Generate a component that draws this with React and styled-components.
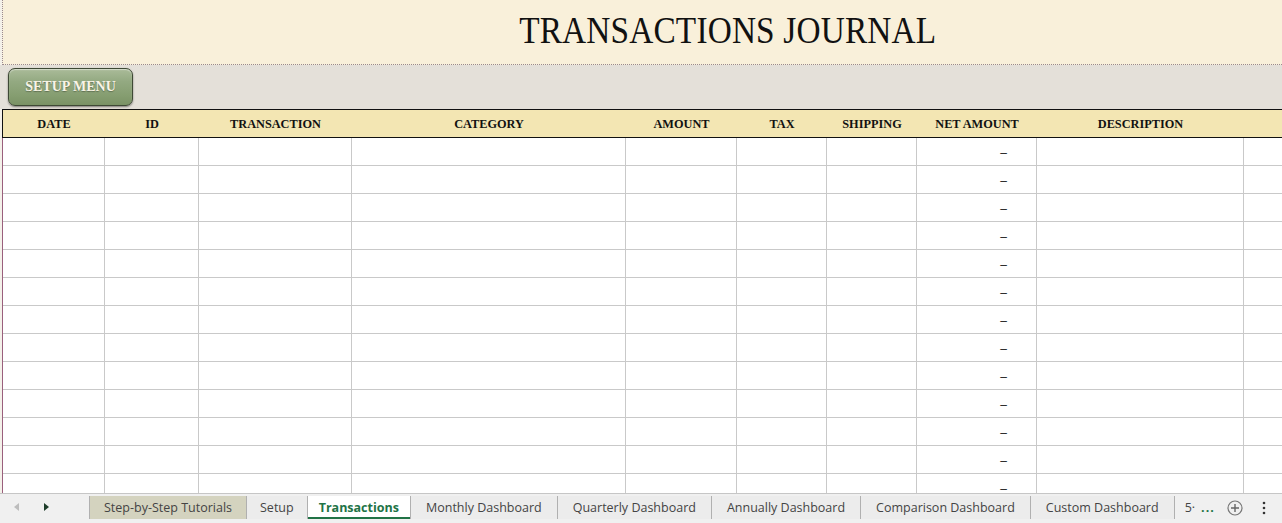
import React from 'react';
import styled, { createGlobalStyle } from 'styled-components';

const GlobalStyle = createGlobalStyle`
  html, body {
    margin: 0;
    padding: 0;
  }
  body {
    background: #f4f1ea;
    overflow: hidden;
  }
`;

const COLUMNS = [
  { label: 'DATE', width: 102 },
  { label: 'ID', width: 94 },
  { label: 'TRANSACTION', width: 153 },
  { label: 'CATEGORY', width: 274 },
  { label: 'AMOUNT', width: 111 },
  { label: 'TAX', width: 90 },
  { label: 'SHIPPING', width: 90 },
  { label: 'NET AMOUNT', width: 120, dash: true },
  { label: 'DESCRIPTION', width: 207 },
  { label: '', width: null },
];

const gridTemplate = COLUMNS.map(c => (c.width ? `${c.width}px` : '1fr')).join(' ');

const TABS = [
  { label: 'Step-by-Step Tutorials', tone: 'khaki' },
  { label: 'Setup', pad: 13 },
  { label: 'Transactions', active: true },
  { label: 'Monthly Dashboard' },
  { label: 'Quarterly Dashboard' },
  { label: 'Annually Dashboard' },
  { label: 'Comparison Dashboard' },
  { label: 'Custom Dashboard' },
];

const ROW_COUNT = 13;

const Sheet = styled.div`
  width: 1282px;
  height: 523px;
  display: flex;
  flex-direction: column;
  overflow: hidden;
`;

const TitleBand = styled.header`
  height: 65px;
  margin-left: 2px;
  box-sizing: border-box;
  background: #f9f0da;
  border-left: 1px dotted #9a8a90;
  border-bottom: 1px dotted #9a8a90;
  display: flex;
  align-items: center;
  justify-content: center;
  padding: 0 0 4px 170px;
`;

const Title = styled.h1`
  margin: 0;
  font-family: 'Liberation Serif', 'Times New Roman', serif;
  font-weight: normal;
  font-size: 37px;
  letter-spacing: 0.2px;
  color: #111;
  transform: scaleX(0.9);
`;

const ToolBand = styled.div`
  height: 44px;
  box-sizing: border-box;
  background: #e4e0d9;
  padding: 3px 0 0 8px;
  display: flex;
  align-items: flex-start;
`;

const MenuButton = styled.button`
  width: 125px;
  height: 38px;
  box-sizing: border-box;
  border: 1px solid #3e4935;
  border-radius: 7px;
  background: linear-gradient(#aabb99 0%, #93a981 35%, #859d70 75%, #7a9265 100%);
  box-shadow: inset 0 1px 1px rgba(255, 255, 255, 0.5), 0 1px 2px rgba(0, 0, 0, 0.45);
  color: #f8f4e6;
  font-family: 'Liberation Serif', 'Times New Roman', serif;
  font-weight: bold;
  font-size: 14px;
  text-shadow: 0 1px 1px rgba(0, 0, 0, 0.3);
  padding: 0 0 1px;
  cursor: pointer;
`;

const Grid = styled.div`
  flex: 1;
  overflow: hidden;
  margin-left: 2px;
  background: #fff;
`;

const HeaderRow = styled.div`
  display: grid;
  grid-template-columns: ${gridTemplate};
  height: 29px;
  box-sizing: border-box;
  background: #f3e6b3;
  border-top: 1px solid #111;
  border-bottom: 1px solid #111;
  border-left: 1px solid #111;
`;

const HeaderCell = styled.div`
  display: flex;
  align-items: center;
  justify-content: center;
  font-family: 'Liberation Serif', 'Times New Roman', serif;
  font-weight: bold;
  font-size: 12.3px;
  color: #111;
  padding-top: 1px;
`;

const Row = styled.div`
  display: grid;
  grid-template-columns: ${gridTemplate};
  height: 28px;
  border-left: 1px solid #9a5f7c;
`;

const Cell = styled.div`
  box-sizing: border-box;
  border-right: 1px solid #c9c9c9;
  border-bottom: 1px solid #c9c9c9;
  display: flex;
  align-items: center;
  justify-content: flex-end;
  padding: 3px 29px 0 0;
  font-family: 'Liberation Sans', Arial, sans-serif;
  font-size: 12px;
  color: #222;
  &:last-child {
    border-right: none;
  }
`;

const TabBar = styled.footer`
  height: 30px;
  box-sizing: border-box;
  background: #f0f0f0;
  border-top: 1px solid #c6c6c6;
  display: flex;
  align-items: stretch;
  padding-bottom: 4px;
  font-family: 'Open Sans', 'Noto Sans', sans-serif;
  font-size: 12.5px;
  color: #444;
`;

const NavArrows = styled.div`
  width: 89px;
  display: flex;
  align-items: center;
  gap: 25px;
  padding-left: 14px;
  box-sizing: border-box;
`;

const Tab = styled.div`
  display: flex;
  align-items: center;
  padding: 0 ${p => p.$pad}px;
  margin-top: 2px;
  border-left: 1px solid #b0b0b0;
  background: ${p => (p.$active ? '#fff' : p.$tone === 'khaki' ? '#d4d3bf' : '#ececec')};
  color: ${p => (p.$active ? '#217346' : '#444')};
  font-weight: ${p => (p.$active ? 700 : 400)};
  box-shadow: ${p => (p.$active ? 'inset 0 -2px 0 #217346' : 'none')};
  white-space: nowrap;
`;

const Overflow = styled.div`
  display: flex;
  align-items: center;
  margin-top: 2px;
  padding-left: 10px;
  border-left: 1px solid #b0b0b0;
`;

const More = styled.span`
  color: #217346;
  font-weight: bold;
  letter-spacing: 1px;
  margin-left: 6px;
`;

const IconSlot = styled.span`
  display: flex;
  align-items: center;
  margin-left: ${p => p.$gap || 0}px;
`;

function Arrow({ dir, color }) {
  const points = dir === 'left' ? '5,0 5,8 0,4' : '0,0 0,8 5,4';
  return (
    <svg width="5" height="8" viewBox="0 0 5 8">
      <polygon points={points} fill={color} />
    </svg>
  );
}

function AddSheetIcon() {
  return (
    <svg width="16" height="16" viewBox="0 0 16 16">
      <circle cx="8" cy="8" r="7" fill="none" stroke="#777" strokeWidth="1.2" />
      <path d="M8 4v8M4 8h8" stroke="#666" strokeWidth="1.4" />
    </svg>
  );
}

function KebabIcon() {
  return (
    <svg width="4" height="14" viewBox="0 0 4 14">
      <circle cx="2" cy="2" r="1.3" fill="#333" />
      <circle cx="2" cy="7" r="1.3" fill="#333" />
      <circle cx="2" cy="12" r="1.3" fill="#333" />
    </svg>
  );
}

function tabPadding(t) {
  if (t.pad) return t.pad;
  if (t.active) return 11;
  if (t.tone === 'khaki') return 14;
  return 15;
}

export default function App() {
  return (
    <Sheet>
      <GlobalStyle />
      <TitleBand>
        <Title>TRANSACTIONS JOURNAL</Title>
      </TitleBand>
      <ToolBand>
        <MenuButton>SETUP MENU</MenuButton>
      </ToolBand>
      <Grid>
        <HeaderRow>
          {COLUMNS.map((c, i) => (
            <HeaderCell key={i}>{c.label}</HeaderCell>
          ))}
        </HeaderRow>
        {Array.from({ length: ROW_COUNT }).map((_, r) => (
          <Row key={r}>
            {COLUMNS.map((c, i) => (
              <Cell key={i}>{c.dash ? '–' : ''}</Cell>
            ))}
          </Row>
        ))}
      </Grid>
      <TabBar>
        <NavArrows>
          <Arrow dir="left" color="#bdbdbd" />
          <Arrow dir="right" color="#1e3d2a" />
        </NavArrows>
        {TABS.map(t => (
          <Tab key={t.label} $active={t.active} $tone={t.tone} $pad={tabPadding(t)}>
            {t.label}
          </Tab>
        ))}
        <Overflow>
          <span>5·</span>
          <More>...</More>
          <IconSlot $gap={12}>
            <AddSheetIcon />
          </IconSlot>
          <IconSlot $gap={19}>
            <KebabIcon />
          </IconSlot>
        </Overflow>
      </TabBar>
    </Sheet>
  );
}
